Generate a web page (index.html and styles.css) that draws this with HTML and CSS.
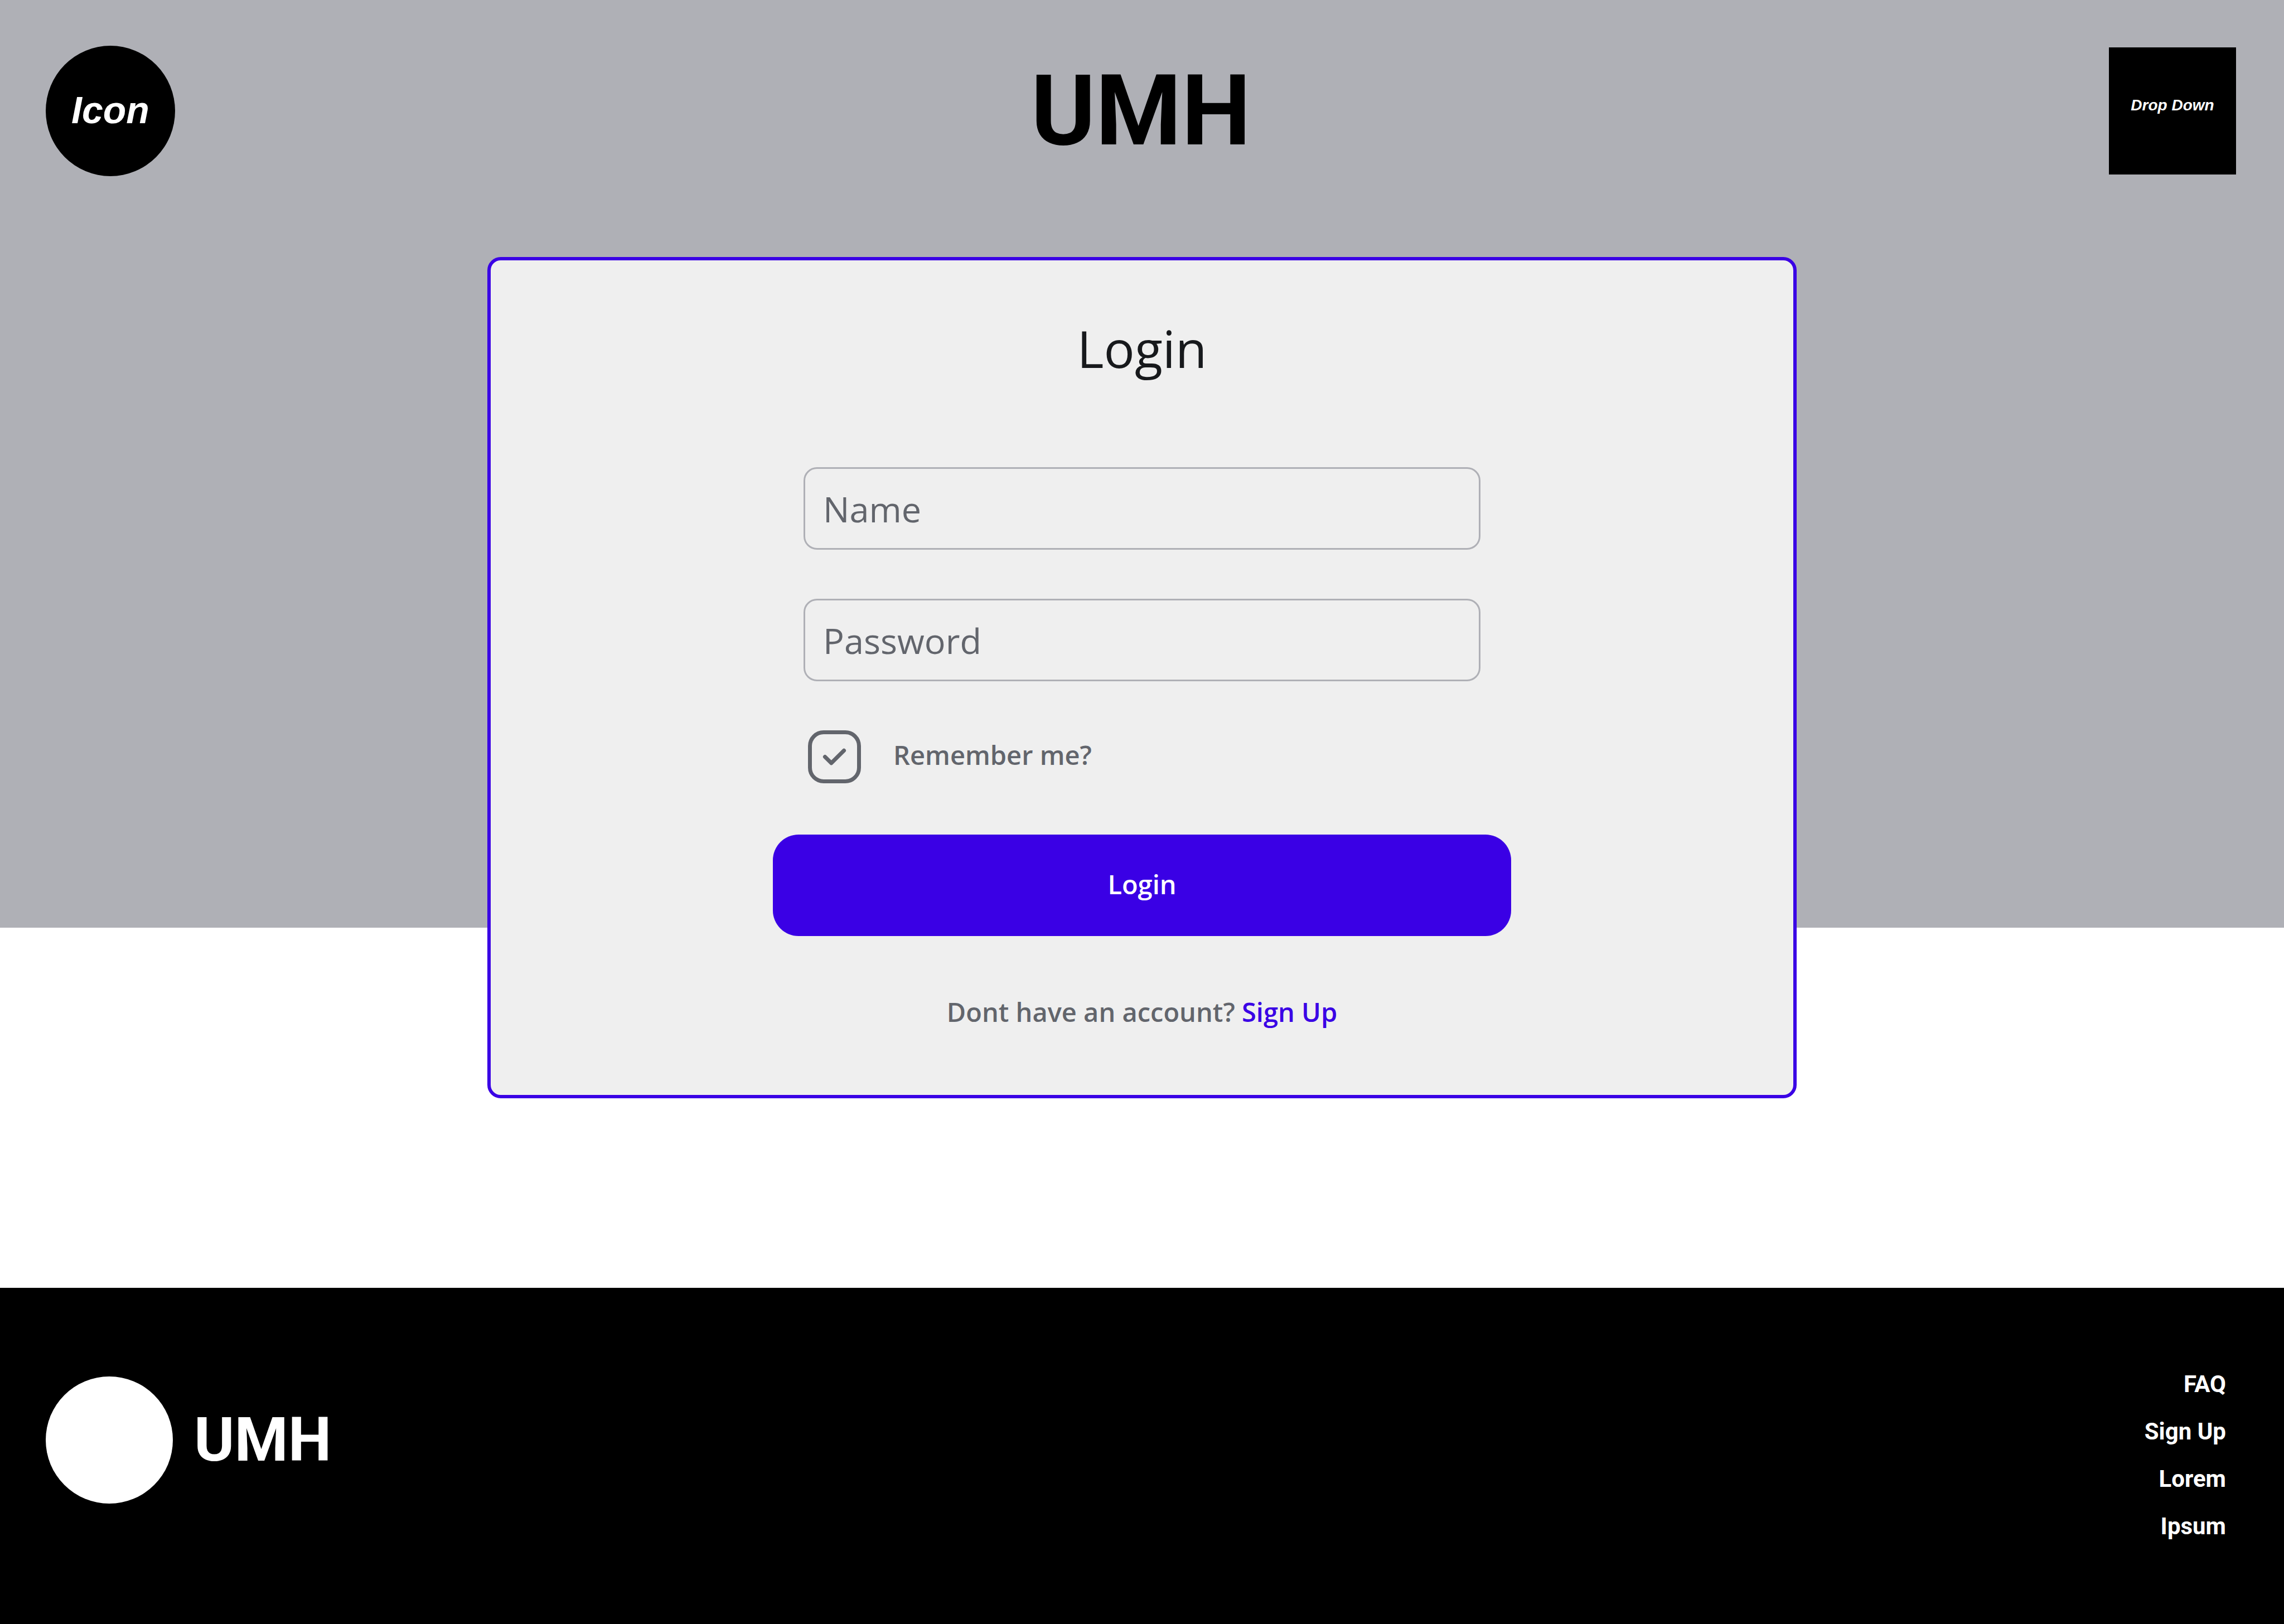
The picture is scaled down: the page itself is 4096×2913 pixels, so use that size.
FILE: index.html
```html
<!DOCTYPE html>
<html lang="en">
<head>
  <meta charset="utf-8">
  <meta name="viewport" content="width=device-width, initial-scale=1">
  <title>UMH - Login</title>
  <link rel="stylesheet" href="styles.css">
</head>
<body class="page">
  <header class="topbar">
    <a class="topbar-icon" href="#">Icon</a>
    <div class="wordmark">UMH</div>
    <button class="topbar-menu" type="button" aria-haspopup="true">Drop Down</button>
  </header>

  <main class="content">
    <form class="card">
      <h1 class="card-title">Login</h1>
      <div class="fields">
        <input class="field" type="text" name="name" placeholder="Name" aria-label="Name">
        <input class="field" type="password" name="password" placeholder="Password" aria-label="Password">
        <div class="remember">
          <span class="tick">
            <input class="tick-input" type="checkbox" id="remember" checked>
            <svg class="tick-mark" viewBox="0 0 134 134" aria-hidden="true">
              <path d="M43 67 59 83 91 51" fill="none" stroke="currentColor" stroke-width="10" stroke-linecap="round" stroke-linejoin="round"/>
            </svg>
          </span>
          <label class="remember-label" for="remember">Remember me?</label>
        </div>
      </div>
      <button class="submit" type="submit">Login</button>
      <p class="signup">Dont have an account? <a class="signup-link" href="#">Sign Up</a></p>
    </form>
  </main>

  <footer class="footer">
    <div class="brand">
      <span class="brand-disc"></span>
      <span class="brand-name">UMH</span>
    </div>
    <nav class="links" aria-label="Footer">
      <a class="link" href="#">FAQ</a>
      <a class="link" href="#">Sign Up</a>
      <a class="link" href="#">Lorem</a>
      <a class="link" href="#">Ipsum</a>
    </nav>
  </footer>
</body>
</html>
```
FILE: styles.css
```css
* {
  box-sizing: border-box;
}

:root {
  --grey: #afb0b6;
  --blue: #3a00e5;
  --muted: #62656c;
  --panel: #efefef;
}

.page {
  margin: 0;
  min-height: 100vh;
  display: flex;
  flex-direction: column;
  background: linear-gradient(var(--grey) 1664px, #fff 1664px);
  font-family: "Open Sans", sans-serif;
}

/* Top bar */
.topbar {
  display: grid;
  grid-template-columns: 1fr auto 1fr;
  align-items: center;
  padding: 82px 86px 0 82px;
}

.topbar-icon {
  display: grid;
  place-items: center;
  width: 232px;
  height: 234px;
  padding-bottom: 4px;
  border-radius: 50%;
  background: #000;
  color: #fff;
  font: italic bold 68px "Liberation Sans", sans-serif;
  text-decoration: none;
}

.wordmark {
  font: bold 176px/232px Roboto, sans-serif;
  color: #000;
}

.topbar-menu {
  justify-self: end;
  width: 228px;
  height: 228px;
  padding: 0 0 20px;
  border: 0;
  background: #000;
  color: #fff;
  font: italic bold 28px "Liberation Sans", sans-serif;
}

/* Login card */
.content {
  flex: 1;
  padding: 145px 80px;
}

.card {
  display: flex;
  flex-direction: column;
  align-items: center;
  max-width: 2348px;
  margin: 0 auto;
  padding: 98px 80px 119px;
  border: 6px solid var(--blue);
  border-radius: 24px;
  background: var(--panel);
}

.card-title {
  margin: 0 0 153px;
  font-size: 92px;
  font-weight: 400;
  line-height: 120px;
  color: #17191c;
}

.fields {
  display: flex;
  flex-direction: column;
  gap: 88px;
  width: 100%;
  max-width: 1214px;
}

.field {
  width: 100%;
  height: 148px;
  padding: 0 32px;
  border: 3px solid var(--grey);
  border-radius: 24px;
  background: transparent;
  color: var(--muted);
  font: 400 63px "Open Sans", sans-serif;
}

.field::placeholder {
  color: var(--muted);
  opacity: 1;
}

.remember {
  display: flex;
  align-items: center;
  gap: 58px;
  padding-left: 8px;
}

.tick {
  display: grid;
  width: 95px;
  height: 95px;
  color: var(--muted);
}

.tick-input,
.tick-mark {
  grid-area: 1 / 1;
  width: 100%;
  height: 100%;
  margin: 0;
}

.tick-input {
  appearance: none;
  border: 7px solid var(--muted);
  border-radius: 28px;
}

.tick-mark {
  visibility: hidden;
  pointer-events: none;
}

.tick-input:checked + .tick-mark {
  visibility: visible;
}

.remember-label,
.submit,
.signup {
  font-family: "Open Sans", sans-serif;
  font-size: 47px;
  font-weight: 600;
  line-height: 60px;
}

.remember-label,
.signup {
  color: var(--muted);
}

.remember-label {
  padding-bottom: 8px;
}

.submit {
  width: 100%;
  max-width: 1324px;
  height: 182px;
  margin: 92px 0 106px;
  padding: 0 0 4px;
  border: 0;
  border-radius: 46px;
  background: var(--blue);
  color: #fff;
}

.signup {
  margin: 0;
}

.signup-link {
  color: var(--blue);
  text-decoration: none;
}

/* Footer */
.footer {
  display: flex;
  justify-content: space-between;
  align-items: flex-start;
  padding: 130px 104px 133px 82px;
  background: #000;
  color: #fff;
  font-family: Roboto, sans-serif;
  font-weight: 700;
}

.brand {
  display: flex;
  align-items: center;
  gap: 38px;
  padding-top: 29px;
}

.brand-disc {
  width: 228px;
  height: 228px;
  border-radius: 50%;
  background: #fff;
}

.brand-name {
  font-size: 110px;
  line-height: 120px;
}

.links {
  display: flex;
  flex-direction: column;
  align-items: flex-end;
}

.link {
  color: #fff;
  font-size: 42px;
  line-height: 85px;
  text-decoration: none;
}
```
